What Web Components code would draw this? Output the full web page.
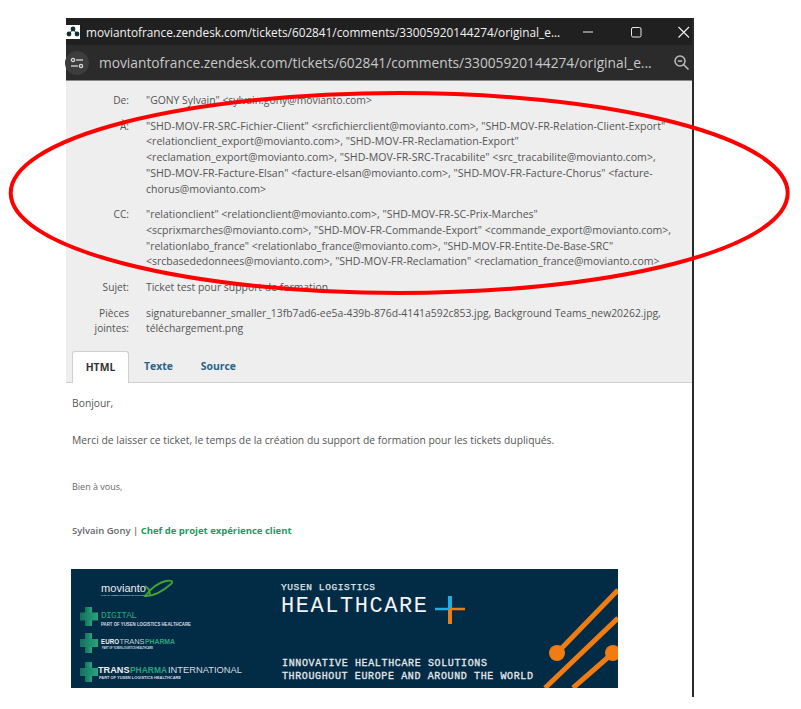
<!DOCTYPE html>
<html lang="fr">
<head>
<meta charset="utf-8">
<title>moviantofrance.zendesk.com</title>
<style>
  html, body { margin: 0; background: #fff; }
  body { font-family: "Open Sans", "Liberation Sans", sans-serif; }
</style>
</head>
<body>
<popup-page>
  <browser-window>
    <mail-headers>
      <mail-row label="De:" size="10.4">"GONY Sylvain" &lt;sylvain.gony@movianto.com&gt;</mail-row>
      <mail-row label="À:" size="10.6">
        <div>"SHD-MOV-FR-SRC-Fichier-Client" &lt;srcfichierclient@movianto.com&gt;, "SHD-MOV-FR-Relation-Client-Export"</div>
        <div>&lt;relationclient_export@movianto.com&gt;, "SHD-MOV-FR-Reclamation-Export"</div>
        <div>&lt;reclamation_export@movianto.com&gt;, "SHD-MOV-FR-SRC-Tracabilite" &lt;src_tracabilite@movianto.com&gt;,</div>
        <div>"SHD-MOV-FR-Facture-Elsan" &lt;facture-elsan@movianto.com&gt;, "SHD-MOV-FR-Facture-Chorus" &lt;facture-</div>
        <div>chorus@movianto.com&gt;</div>
      </mail-row>
      <mail-row label="CC:" size="10.5">
        <div>"relationclient" &lt;relationclient@movianto.com&gt;, "SHD-MOV-FR-SC-Prix-Marches"</div>
        <div>&lt;scprixmarches@movianto.com&gt;, "SHD-MOV-FR-Commande-Export" &lt;commande_export@movianto.com&gt;,</div>
        <div>"relationlabo_france" &lt;relationlabo_france@movianto.com&gt;, "SHD-MOV-FR-Entite-De-Base-SRC"</div>
        <div>&lt;srcbasededonnees@movianto.com&gt;, "SHD-MOV-FR-Reclamation" &lt;reclamation_france@movianto.com&gt;</div>
      </mail-row>
      <mail-row label="Sujet:" size="10.4">Ticket test pour support de formation</mail-row>
      <mail-row label="Pièces jointes:" size="10.36">
        <div>signaturebanner_smaller_13fb7ad6-ee5a-439b-876d-4141a592c853.jpg, Background Teams_new20262.jpg,</div>
        <div>téléchargement.png</div>
      </mail-row>
    </mail-headers>
    <mail-tabs></mail-tabs>
    <mail-body></mail-body>
  </browser-window>
</popup-page>

<script>
// page blanche + fenetre + ellipse rouge posee par dessus
class PopupPage extends HTMLElement {
  constructor() {
    super();
    this.attachShadow({ mode: "open" });
    this.shadowRoot.innerHTML = `
      <style>
        :host { display: block; position: relative; width: 801px; height: 709px; padding: 18px 0 0 66px; box-sizing: border-box; overflow: hidden; }
        svg { position: absolute; left: 0; top: 0; pointer-events: none; }
      </style>
      <slot></slot>
      <svg width="801" height="709" viewBox="0 0 801 709">
        <ellipse cx="399.2" cy="193" rx="388.5" ry="100" fill="none" stroke="#fe0000" stroke-width="4"/>
      </svg>
    `;
  }
}

class BrowserWindow extends HTMLElement {
  constructor() {
    super();
    this.attachShadow({ mode: "open" });
    this.shadowRoot.innerHTML = `
      <style>
        :host { display: block; width: 628px; height: 679px; box-sizing: border-box; border-right: 2px solid #2a2a2a; background: #fff; }
        .title { display: flex; align-items: center; height: 27px; background: #202020; color: #f2f2f2; font-size: 11.8px; }
        .fav { flex: none; width: 14px; height: 14px; background: #fff; display: flex; align-items: center; justify-content: center; }
        .title span { flex: 1; min-width: 0; padding-left: 6px; white-space: nowrap; }
        .controls { display: flex; align-items: center; flex: none; width: 112px; }
        .address { display: flex; align-items: center; height: 36px; background: #2b2b2b; border-bottom: 1px solid #8a8a8a; box-sizing: border-box; color: #c8c8c8; font-size: 13.75px; }
        .tune { flex: none; width: 24px; height: 24px; margin: 0 10px 0 -1px; border-radius: 50%; background: #3d3d3d; display: flex; align-items: center; justify-content: center; }
        .address span { flex: 1; min-width: 0; white-space: nowrap; }
        .address svg.zoom { flex: none; margin-right: 2px; }
      </style>
      <div class="title">
        <div class="fav">
          <svg width="14" height="11" viewBox="0 0 14 11">
            <circle cx="3" cy="8" r="2.4" fill="#12303a"/><circle cx="11" cy="8" r="2.4" fill="#12303a"/>
            <circle cx="7" cy="3" r="2.4" fill="#12303a"/><path d="M3 8 7 3l4 5" stroke="#12303a" fill="none"/>
          </svg>
        </div>
        <span>moviantofrance.zendesk.com/tickets/602841/comments/33005920144274/original_e...</span>
        <div class="controls">
          <svg width="112" height="16" viewBox="0 0 112 16">
            <path d="M3 8h10" stroke="#e8e8e8" stroke-width="1"/>
            <rect x="51.500" y="3.500" width="9.500" height="9.500" rx="1.500" fill="none" stroke="#e8e8e8" stroke-width="1"/>
            <path d="M98.500 3 109 13.500M109 3 98.500 13.500" stroke="#f0f0f0" stroke-width="1.100"/>
          </svg>
        </div>
      </div>
      <div class="address">
        <div class="tune">
          <svg width="14" height="12" viewBox="0 0 14 12" fill="none" stroke="#d8d8d8" stroke-width="1.300">
            <circle cx="3" cy="3" r="1.600"/><path d="M6 3h7"/>
            <circle cx="11" cy="9" r="1.600"/><path d="M1 9h7"/>
          </svg>
        </div>
        <span>moviantofrance.zendesk.com/tickets/602841/comments/33005920144274/original_e...</span>
        <svg class="zoom" width="17" height="17" viewBox="0 0 17 17" fill="none" stroke="#bdbdbd" stroke-width="1.500">
          <circle cx="7" cy="7" r="5"/><path d="M10.500 10.500 15.500 15.500M4.800 7h4.400"/>
        </svg>
      </div>
      <slot></slot>
    `;
  }
}

class MailHeaders extends HTMLElement {
  constructor() {
    super();
    this.attachShadow({ mode: "open" });
    this.shadowRoot.innerHTML = `
      <style>
        :host { display: block; background: #eeeeee; padding: 12px 17px 0 0; height: 270px; box-sizing: border-box; }
        .rows { display: flex; flex-direction: column; gap: 10px; }
      </style>
      <div class="rows"><slot></slot></div>
    `;
  }
}

class MailRow extends HTMLElement {
  constructor() {
    super();
    this.attachShadow({ mode: "open" });
    this.shadowRoot.innerHTML = `
      <style>
        :host { display: grid; grid-template-columns: 63px 1fr; column-gap: 17px; line-height: 15.7px; color: #555; white-space: nowrap; }
        .label { text-align: right; white-space: normal; font-size: 10.2px; }
      </style>
      <div class="label"></div>
      <div><slot></slot></div>
    `;
    this.shadowRoot.querySelector(".label").textContent = this.getAttribute("label");
    this.style.fontSize = this.getAttribute("size") + "px";
  }
}

class MailTabs extends HTMLElement {
  constructor() {
    super();
    this.attachShadow({ mode: "open" });
    this.shadowRoot.innerHTML = `
      <style>
        :host { display: flex; background: #eeeeee; height: 32px; box-sizing: border-box; border-bottom: 1px solid #cfcfcf; padding-left: 6px; font-size: 10.4px; font-weight: 700; color: #2b6288; }
        .tab { display: flex; align-items: center; padding: 0 14px 2px; height: 32px; box-sizing: border-box; }
        .on { width: 57px; justify-content: center; padding: 0 0 2px; margin-right: 1px; background: #fff; color: #333; border: 1px solid #cfcfcf; border-bottom: 0; border-radius: 3px 3px 0 0; }
      </style>
      <div class="tab on">HTML</div>
      <div class="tab">Texte</div>
      <div class="tab">Source</div>
    `;
  }
}

class MailBody extends HTMLElement {
  constructor() {
    super();
    this.attachShadow({ mode: "open" });
    this.shadowRoot.innerHTML = `
      <style>
        :host { display: block; padding: 12px 0 0 6px; font-size: 10.33px; line-height: 16px; color: #555; }
        p { margin: 0; }
        .merci { margin-top: 21px; }
        .small { font-size: 9px; line-height: 12px; }
        .bien { margin-top: 33px; color: #666; }
        .sign { margin-top: 32px; font-size: 9.5px; font-weight: 600; color: #666; }
        .green { color: #1a9a62; font-weight: 700; }
      </style>
      <p>Bonjour,</p>
      <p class="merci">Merci de laisser ce ticket, le temps de la création du support de formation pour les tickets dupliqués.</p>
      <p class="small bien">Bien à vous,</p>
      <p class="small sign">Sylvain Gony | <span class="green">Chef de projet expérience client</span></p>
      <signature-banner></signature-banner>
    `;
  }
}

// la banniere est une image dans le mail : tout en svg, texte garde en <text>
class SignatureBanner extends HTMLElement {
  constructor() {
    super();
    this.attachShadow({ mode: "open" });
    const cross = (x, y, h) => `
      <g fill="url(#fade)">
        <rect x="${x + 5}" y="${y}" width="7" height="${h}"/>
        <rect x="${x}" y="${y + h / 2 - 4}" width="18" height="8"/>
      </g>`;
    const word = (txt, x, y, size, len, fill, weight) => `<text class="sans" x="${x}" y="${y}" font-size="${size}" font-weight="${weight}" textLength="${len}" lengthAdjust="spacingAndGlyphs" fill="${fill}">${txt}</text>`;
    const part = (x, y, size, len) => word("PART OF YUSEN LOGISTICS HEALTHCARE", x, y, size, len, "#d5dde0", 700);
    this.shadowRoot.innerHTML = `
      <style>
        :host { display: block; width: 547px; height: 119px; margin: 32px 0 0 -1px; }
        svg { display: block; }
        .sans { font-family: "Liberation Sans", sans-serif; }
        .mono { font-family: "Liberation Mono", monospace; }
      </style>
      <svg width="547" height="119" viewBox="0 0 547 119">
        <defs>
          <linearGradient id="fade">
            <stop offset="0" stop-color="#14705f"/><stop offset="1" stop-color="#25a67c"/>
          </linearGradient>
        </defs>
        <rect width="547" height="119" fill="#022b46"/>
        <text class="sans" x="30" y="23" font-size="11.500" textLength="45" lengthAdjust="spacingAndGlyphs" fill="#e8eef0">movianto</text>
        ${part(30, 27, 2.500, 44)}
        <path d="M73 27C82 28 92 22 100 15 103 12 100 11 95 12 85 14 78 22 74 27M74 17C78 20 80 22 78 27" fill="none" stroke="#3fa535" stroke-width="1.800"/>
        ${cross(9, 38, 19)}
        <text class="mono" x="30" y="49" font-size="9.500" textLength="36" fill="#2aa37d">DIGITAL</text>
        ${part(30, 57, 4.500, 90)}
        ${cross(9, 64, 20)}
        ${word("EURO", 30, 75, 6.400, 18, "#eef2f3", 700)}
        ${word("TRANS", 48.500, 75, 6.800, 25, "#c5d0d5", 400)}
        ${word("PHARMA", 74, 75, 6.800, 30, "#2aa37d", 700)}
        ${part(31, 79.500, 3, 51)}
        ${cross(9, 93, 20)}
        ${word("TRANS", 27, 104, 8.600, 31.500, "#eef2f3", 700)}
        ${word("PHARMA", 59, 104, 8.600, 37, "#2aa37d", 700)}
        ${word("INTERNATIONAL", 97, 104, 8.600, 74, "#d5dde0", 400)}
        ${part(28, 110, 4, 82)}

        <text class="mono" x="210" y="21" font-size="9.500" textLength="94" fill="#dfe5e8" stroke="#dfe5e8" stroke-width=".25">YUSEN LOGISTICS</text>
        <text class="mono" x="210" y="43" font-size="22" textLength="146" fill="#f2f4f5">HEALTHCARE</text>
        <path d="M364 40h15" stroke="#20aee4" stroke-width="2.500"/>
        <path d="M379 27v13" stroke="#20aee4" stroke-width="4"/>
        <path d="M379 40h15" stroke="#f07c12" stroke-width="2.500"/>
        <path d="M379 41v14" stroke="#f07c12" stroke-width="4"/>
        <text class="mono" x="211" y="97" font-size="10" textLength="205" fill="#e4e8ea" stroke="#e4e8ea" stroke-width=".3">INNOVATIVE HEALTHCARE SOLUTIONS</text>
        <text class="mono" x="211" y="110" font-size="10" textLength="251" fill="#e4e8ea" stroke="#e4e8ea" stroke-width=".3">THROUGHOUT EUROPE AND AROUND THE WORLD</text>

        <g stroke="#f07c12" stroke-width="5" fill="#f07c12">
          <path d="M486 84 547 21"/>
          <path d="M474 119 547 49"/>
          <path d="M502 119 542 84"/>
          <circle cx="486" cy="84" r="8" stroke="none"/>
          <circle cx="542" cy="84" r="8" stroke="none"/>
        </g>
      </svg>
    `;
  }
}

customElements.define("popup-page", PopupPage);
customElements.define("browser-window", BrowserWindow);
customElements.define("mail-headers", MailHeaders);
customElements.define("mail-row", MailRow);
customElements.define("mail-tabs", MailTabs);
customElements.define("mail-body", MailBody);
customElements.define("signature-banner", SignatureBanner);
</script>
</body>
</html>
